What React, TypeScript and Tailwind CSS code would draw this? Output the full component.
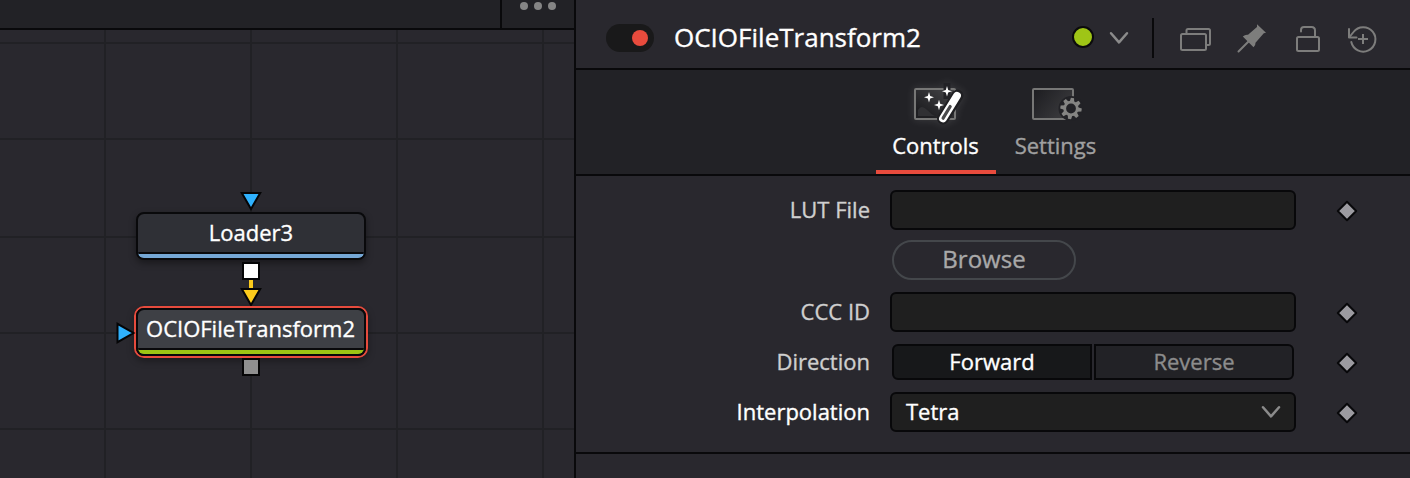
import type { ReactNode } from "react";

function Diamond() {
  return (
    <svg width="22" height="22" viewBox="0 0 22 22" className="mt-0.5 ml-10 shrink-0">
      <path d="M11 1.8 20.2 11 11 20.2 1.8 11Z" fill="#9c9ba1" stroke="#08080a" strokeWidth="2" strokeLinejoin="round" />
    </svg>
  );
}

function Chevron({ className }: { className?: string }) {
  return (
    <svg width="20" height="14" viewBox="0 0 20 14" className={className} fill="none" stroke="#8b8b8b" strokeWidth="2.5" strokeLinecap="round" strokeLinejoin="round">
      <path d="M2 2.2 10 11.4 18 2.2" />
    </svg>
  );
}

function Row({ label, active, height, children }: { label: string; active?: boolean; height: string; children: ReactNode }) {
  return (
    <div className={`flex items-center ${height}`}>
      <div className={`w-[294px] shrink-0 pb-0.5 text-right text-[22px] leading-[34px] ${active ? "text-white" : "text-[#cfcfcf]"}`}>{label}</div>
      <div className="ml-5 flex w-[406px] shrink-0">{children}</div>
      <Diamond />
    </div>
  );
}

function DownArrow({ fill }: { fill: string }) {
  return (
    <svg width="22" height="20" viewBox="0 0 22 20">
      <path d="M1.8 2H20.2L11 18Z" fill={fill} stroke="#050506" strokeWidth="2" />
    </svg>
  );
}

function Graph() {
  return (
    <div className="relative min-h-0 flex-1 overflow-hidden">
      <svg className="absolute left-0 top-0" width="574" height="448" stroke="#212125" strokeWidth="2">
        <path d="M105 0V448M251 0V448M397 0V448M543 0V448M0 13H574M0 109H574M0 207H574M0 303H574M0 399H574" />
      </svg>
      <div className="absolute left-[240px] top-[161px]"><DownArrow fill="#2fb1fd" /></div>
      <div className="absolute left-[136px] top-[182px] flex h-12 w-[230px] flex-col overflow-hidden rounded-lg border-2 border-[#09090b] bg-[#2f3036] shadow-[0_3px_7px_rgba(0,0,0,0.4)]">
        <div className="h-[38px] text-center text-[22px] leading-9 text-white">Loader3</div>
        <div className="h-1.5 border-t-2 border-[#09090b] bg-[#75a7d5]" />
      </div>
      <div className="absolute left-[249px] top-[248px] h-3 w-1 bg-[#fccb1c]" />
      <div className="absolute left-[242px] top-[232px] h-[18px] w-[18px] border-2 border-[#050506] bg-white" />
      <div className="absolute left-[240px] top-[257px]"><DownArrow fill="#fccb1c" /></div>
      <div className="absolute left-[134px] top-[276px] h-[52px] w-[234px] rounded-[10px] border-2 border-[#e64b3d] bg-[#09090b] shadow-[0_3px_7px_rgba(0,0,0,0.35)]">
        <div className="flex h-12 flex-col overflow-hidden rounded-lg border-2 border-[#09090b] bg-[#3e4045]">
          <div className="h-[38px] pr-px text-center text-[22px] leading-9 text-white">OCIOFileTransform2</div>
          <div className="h-1.5 border-t-2 border-[#09090b] bg-[#9dc414]" />
        </div>
      </div>
      <svg className="absolute left-[116px] top-[292px]" width="20" height="22" viewBox="0 0 20 22">
        <path d="M1.5 1.8V20.2L17.5 11Z" fill="#2fb1fd" stroke="#050506" strokeWidth="2" />
      </svg>
      <div className="absolute left-[242px] top-[328px] h-[18px] w-[18px] border-2 border-[#050506] bg-[#8f8f8f]" />
    </div>
  );
}

function ControlsIcon() {
  return (
    <svg width="60" height="48" viewBox="906 80 60 48" className="overflow-visible drop-shadow-[0_0_4px_rgba(255,255,255,0.12)]">
      <defs>
        <linearGradient id="cg" x1="0" y1="1" x2="1" y2="0">
          <stop offset="0.2" stopColor="#1e1e21" />
          <stop offset="1" stopColor="#47474a" />
        </linearGradient>
      </defs>
      <rect x="915" y="89" width="40" height="30" rx="1" fill="url(#cg)" stroke="#777776" strokeWidth="2" />
      <path d="M918 110C924 100 930 118 938 116H918Z" fill="#303033" />
      <path d="M943 118.5 957.5 95.5" stroke="#202023" strokeWidth="12" strokeLinecap="round" />
      <path d="M947 83V99" stroke="#222226" strokeWidth="7" />
      <path d="M943 118.5 957 95.8" stroke="#fff" strokeWidth="7.8" strokeLinecap="round" />
      <path d="M943.1 118.2 950.2 106.5" stroke="#4a4a4c" strokeWidth="3.2" strokeLinecap="round" />
      <g fill="#fff">
        <path d="M929 92 930.2 96 934 97.2 930.2 98.4 929 102.4 927.8 98.4 924 97.2 927.8 96Z" />
        <path d="M947 86 948.2 90 952 91.2 948.2 92.4 947 96.4 945.8 92.4 942 91.2 945.8 90Z" />
        <path d="M939 99.8 940.2 103.8 944 105 940.2 106.2 939 110.2 937.8 106.2 934 105 937.8 103.8Z" />
      </g>
    </svg>
  );
}

const teeth = [0, 45, 90, 135, 180, 225, 270, 315];

function SettingsIcon() {
  return (
    <svg width="60" height="48" viewBox="1026 80 60 48">
      <defs>
        <linearGradient id="sg" x1="0" y1="0" x2="1" y2="0.6">
          <stop offset="0" stopColor="#1c1c20" />
          <stop offset="1" stopColor="#3a3a3d" />
        </linearGradient>
      </defs>
      <rect x="1033" y="89" width="40" height="30" rx="1" fill="url(#sg)" stroke="#777776" strokeWidth="2" />
      <circle cx="1071" cy="108.5" r="12.5" fill="#222226" />
      <circle cx="1071" cy="108.5" r="6.3" fill="none" stroke="#858583" strokeWidth="2.8" />
      {teeth.map((a) => (
        <path key={a} d="M1068.7 102 1069.4 97.8H1072.6L1073.3 102Z" fill="#858583" transform={`rotate(${a + 8} 1071 108.5)`} />
      ))}
    </svg>
  );
}

function HeaderIcons() {
  return (
    <div className="mt-0.5 flex h-9 items-center text-[#7d7d7c]">
      <svg width="34" height="30" viewBox="1179 24 34 30" fill="none" stroke="currentColor" strokeWidth="2">
        <rect x="1181" y="34" width="25" height="16" rx="1.5" />
        <path d="M1186.5 33.5V30.5Q1186.5 29 1188 29H1208.5Q1210 29 1210 30.5V43.5Q1210 45 1208.5 45H1206.5" />
      </svg>
      <svg className="ml-[23px]" width="32" height="32" viewBox="1236 23 32 32">
        <path d="M1257 24.2 1266 32.7 1263.8 33.2 1255.5 42.8Q1255.8 45 1253.5 47.3L1242.8 36.5Q1245.3 34.3 1248 34.8L1257 27Z" fill="currentColor" />
        <path d="M1249 41 1238.5 51.5" stroke="currentColor" strokeWidth="2" strokeLinecap="round" />
      </svg>
      <svg className="ml-[26px]" width="28" height="30" viewBox="1294 24 28 30" fill="none" stroke="currentColor" strokeWidth="2" strokeLinecap="round">
        <rect x="1297" y="37" width="22" height="14" rx="1.5" />
        <path d="M1301 31.5V30Q1301 27 1304 27H1311.5Q1315 27 1315 30.5V36.5" />
      </svg>
      <svg className="ml-[24px]" width="32" height="32" viewBox="1346 23 32 32" fill="none" stroke="currentColor" strokeWidth="2" strokeLinecap="round" strokeLinejoin="round">
        <path d="M1349.5 37 1353.5 32A12.2 12.2 0 1 1 1351.3 42" />
        <path d="M1349 29V37.5H1356.5" />
        <path d="M1358 39H1368M1363 34V44" strokeLinecap="butt" />
      </svg>
    </div>
  );
}

export default function App() {
  return (
    <div className="flex h-[478px] w-[1410px] overflow-hidden bg-[#29282e] font-['Open_Sans',sans-serif] [-webkit-text-stroke:0.35px]">
      <section className="flex w-[576px] shrink-0 flex-col border-r-2 border-[#09090b]">
        <div className="flex h-[30px] shrink-0 border-b-2 border-[#09090b] bg-[#222226]">
          <div className="w-[502px] border-r-2 border-[#09090b]" />
          <div className="flex gap-1.5 pl-[18px] pt-0.5">
            <i className="h-2 w-2 rounded-full bg-[#858585]" />
            <i className="h-2 w-2 rounded-full bg-[#858585]" />
            <i className="h-2 w-2 rounded-full bg-[#858585]" />
          </div>
        </div>
        <Graph />
      </section>
      <section className="flex min-w-0 flex-1 flex-col">
        <header className="flex h-[70px] shrink-0 items-center border-b-2 border-[#09090b] pl-[30px] pt-2">
          <div className="flex h-7 w-12 items-center justify-end rounded-full bg-[#19191a] pr-1.5">
            <span className="h-4 w-4 rounded-full bg-[#e84b3d]" />
          </div>
          <h1 className="ml-5 w-[396px] pb-0.5 text-[26px] leading-9 text-white">OCIOFileTransform2</h1>
          <span className="-mt-0.5 ml-0.5 h-[22px] w-[22px] shrink-0 rounded-full border-2 border-[#0b0b0c] bg-[#9fc516]" />
          <Chevron className="ml-[15px] shrink-0" />
          <div className="ml-[23px] h-10 w-0.5 shrink-0 bg-[#09090b]" />
          <div className="ml-[25px]"><HeaderIcons /></div>
        </header>
        <nav className="flex h-[106px] shrink-0 border-b-2 border-[#09090b] bg-[#222226] pl-[300px]">
          <div className="flex w-[120px] flex-col items-center border-b-4 border-[#e84b3d] pt-2.5 text-[22px] leading-[34px] text-white">
            <ControlsIcon />
            <span className="pr-px">Controls</span>
          </div>
          <div className="flex w-[120px] flex-col items-center pt-2.5 text-[22px] leading-[34px] text-[#a0a0a0]">
            <SettingsIcon />
            <span className="pr-px">Settings</span>
          </div>
        </nav>
        <main className="flex h-[278px] shrink-0 flex-col border-b-2 border-[#09090b] pt-3.5">
          <Row label="LUT File" height="h-10">
            <div className="h-10 w-full rounded-md border-2 border-[#08080a] bg-[#1f1f1f]" />
          </Row>
          <button className="ml-[316px] mt-2.5 h-10 w-[184px] rounded-full border-2 border-[#44474b] pb-0.5 text-[24px] leading-[34px] text-[#a9a9a9]">Browse</button>
          <div className="mt-3 flex flex-col gap-3">
            <Row label="CCC ID" height="h-10">
              <div className="h-10 w-full rounded-md border-2 border-[#08080a] bg-[#1f1f1f]" />
            </Row>
            <Row label="Direction" height="h-9">
              <div className="ml-0.5 flex gap-0.5 text-center text-[22px] leading-[30px]">
                <div className="h-9 w-[200px] rounded-l-md border-2 border-[#08080a] bg-[#17181a] text-white">Forward</div>
                <div className="h-9 w-[200px] rounded-r-md border-2 border-[#08080a] bg-[#222226] text-[#8c8c8c]">Reverse</div>
              </div>
            </Row>
            <Row label="Interpolation" height="h-10" active>
              <div className="flex h-10 w-full items-center justify-between rounded-md border-2 border-[#08080a] bg-[#1f1f1f] pl-3.5 pr-[13px] text-[22px] leading-[34px] text-white">
                <span className="pb-0.5">Tetra</span>
                <Chevron />
              </div>
            </Row>
          </div>
        </main>
      </section>
    </div>
  );
}
